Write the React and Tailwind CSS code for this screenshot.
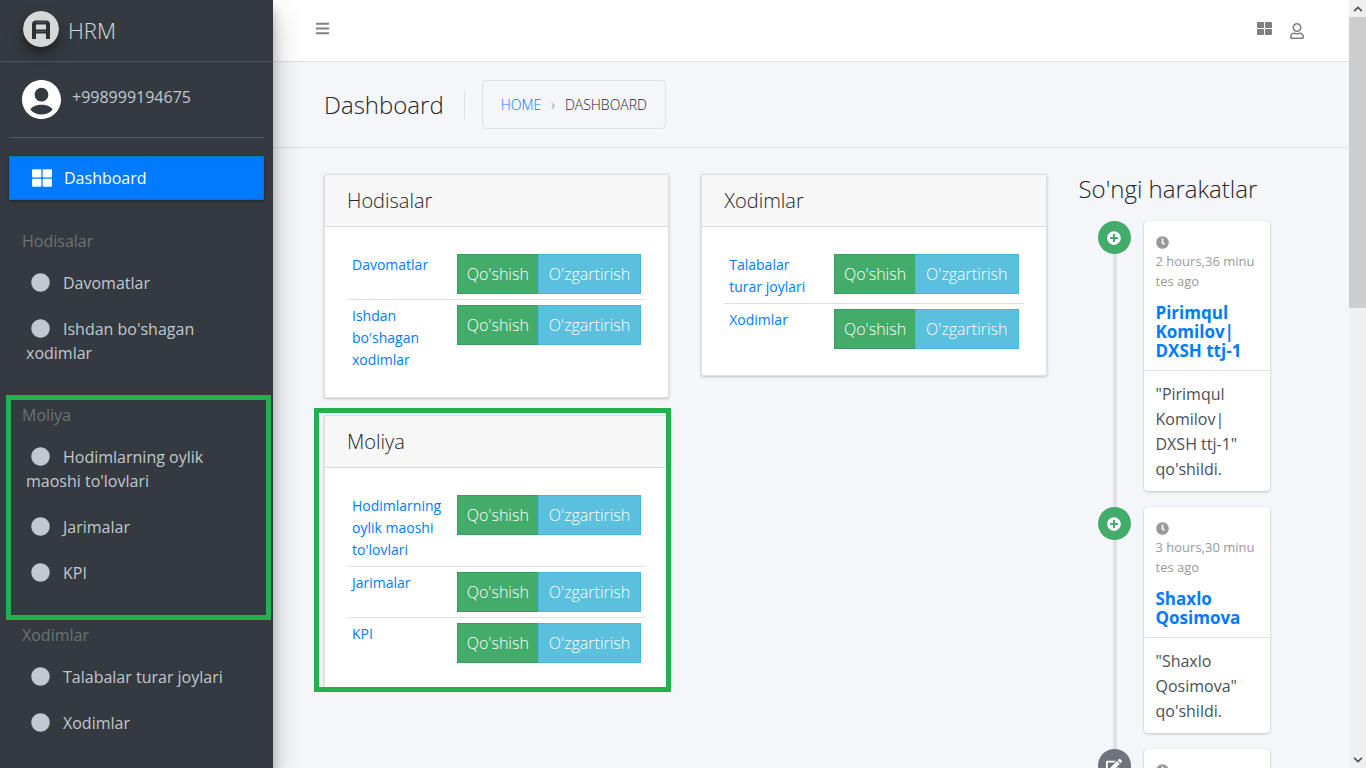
import React from "react";
import {
  FaThLarge,
  FaBars,
  FaRegUser,
  FaCircle,
  FaClock,
  FaPlusCircle,
  FaEdit,
  FaChevronUp,
  FaChevronDown,
} from "react-icons/fa";

const menu = [
  { title: "Hodisalar", items: ["Davomatlar", "Ishdan bo'shagan xodimlar"] },
  {
    title: "Moliya",
    marked: true,
    items: ["Hodimlarning oylik maoshi to'lovlari", "Jarimalar", "KPI"],
  },
  { title: "Xodimlar", items: ["Talabalar turar joylari", "Xodimlar"] },
];

const actions = [
  {
    kind: "add",
    time: "2\u00a0hours,36\u00a0minutes\u00a0ago",
    title: "Pirimqul Komilov| DXSH ttj-1",
    text: "\"Pirimqul Komilov| DXSH ttj-1\" qo'shildi.",
  },
  {
    kind: "add",
    time: "3\u00a0hours,30\u00a0minutes\u00a0ago",
    title: "Shaxlo Qosimova",
    text: "\"Shaxlo Qosimova\" qo'shildi.",
  },
  { kind: "edit" },
];

function Logo() {
  return (
    <svg
      viewBox="0 0 36 36"
      className="h-9 w-9 rounded-full shadow-[0_10px_20px_rgba(0,0,0,0.19),0_6px_6px_rgba(0,0,0,0.23)]"
      aria-hidden="true"
    >
      <circle cx="18" cy="18" r="18" fill="#d6d7d8" />
      <path
        d="M11 28V13.5Q11 11.500 13 11.500H23Q25 11.500 25 13.500V28M11 20.500H25"
        fill="none"
        stroke="#2d3034"
        strokeWidth="4"
      />
      <path d="M13 11.200H23M13 20.500H23" stroke="#5c5f62" strokeWidth="0.800" />
    </svg>
  );
}

function Avatar() {
  return (
    <svg viewBox="2 2 20 20" className="h-[39px] w-[39px]" fill="#fff" aria-hidden="true">
      <path d="M12 2C6.48 2 2 6.48 2 12s4.480 10 10 10 10-4.480 10-10S17.520 2 12 2zm0 4c1.930 0 3.500 1.570 3.500 3.500S13.930 13 12 13s-3.500-1.570-3.500-3.500S10.070 6 12 6zm0 13.700c-2.290 0-4.400-.9-5.700-2.600.6-1.500 3.300-2.400 5.700-2.400s5.100.9 5.700 2.400c-1.300 1.700-3.410 2.600-5.700 2.600z" />
    </svg>
  );
}

function Sidebar() {
  return (
    <aside className="relative z-10 w-[273px] shrink-0 bg-[#343a40] text-[#c2c7d0] shadow-[0_14px_28px_rgba(0,0,0,0.25),0_10px_10px_rgba(0,0,0,0.22)]">
      <a
        href="#home"
        className="flex h-[62px] items-center gap-[9px] border-b border-[#4b545c] pb-1 pl-[23px] text-[22px] font-light text-white/80"
      >
        <Logo />
        <span className="pt-1">HRM</span>
      </a>
      <div className="px-[9px]">
        <div className="flex h-[76px] items-center gap-[11px] border-b border-[#4f5962] pl-[13px]">
          <Avatar />
          <a href="#profile" className="pb-1.5">
            +998999194675
          </a>
        </div>
        <nav className="mt-[18px]">
          <a
            href="#dashboard"
            className="flex h-11 items-center gap-2 border border-[#0c74bd] bg-[#007bff] pl-[18px] text-white shadow-[0_1px_3px_rgba(0,0,0,0.12),0_1px_2px_rgba(0,0,0,0.24)]"
          >
            <span className="flex w-7 justify-center">
              <FaThLarge size={20} />
            </span>
            Dashboard
          </a>
          {menu.map((group) => (
            <section key={group.title} className="relative mt-[29px]">
              <h2 className="pl-[13px] leading-6 text-[#6d7276]">{group.title}</h2>
              <ul className="mt-[9px] flex flex-col gap-1">
                {group.items.map((item) => (
                  <li key={item}>
                    <a href="#item" className="block py-[9px] pr-4 pl-[17px] leading-6">
                      <span className="mr-2 inline-flex h-5 w-[29px] items-center justify-center pb-1 align-middle">
                        <FaCircle size={19} className="shrink-0" />
                      </span>
                      {item}
                    </a>
                  </li>
                ))}
              </ul>
              {group.marked && (
                <div className="pointer-events-none absolute -top-2 -right-[7px] -bottom-[26px] -left-[3px] border-5 border-[#22b14c]" />
              )}
            </section>
          ))}
        </nav>
      </div>
    </aside>
  );
}

function Card({ title, items, marked }) {
  return (
    <section className="relative rounded-xs border border-black/12 bg-white shadow-[0_0_1px_rgba(0,0,0,0.125),0_1px_3px_rgba(0,0,0,0.2)]">
      <h3 className="flex h-[52px] items-center border-b border-black/12 bg-[#f7f7f7] px-[22px] text-xl font-light">
        {title}
      </h3>
      <div className="px-[22px] pt-[22px] pb-[21px]">
        <table className="w-full">
          <tbody>
            {items.map((item) => (
              <tr key={item} className="border-t border-[#dee2e6] align-top first:border-t-0">
                <th scope="row" className="p-[5px] text-left text-sm leading-[22px] font-normal">
                  <a href="#model" className="text-[#007bff]">
                    {item}
                  </a>
                </th>
                <td className="w-px p-[5px]">
                  <div className="flex whitespace-nowrap font-light text-white">
                    <a
                      href="#add"
                      className="flex h-10 items-center border border-r-0 border-[#3c9a5f] bg-[#43ac6a] px-[9px]"
                    >
                      Qo'shish
                    </a>
                    <a
                      href="#change"
                      className="flex h-10 items-center border border-[#46b8da] bg-[#5bc0de] px-[10px]"
                    >
                      O'zgartirish
                    </a>
                  </div>
                </td>
              </tr>
            ))}
          </tbody>
        </table>
      </div>
      {marked && (
        <div className="pointer-events-none absolute -top-2 -right-[3px] -bottom-[3px] -left-[11px] border-5 border-[#22b14c]" />
      )}
    </section>
  );
}

function Timeline() {
  return (
    <ul className="relative mt-[17px] flex flex-col gap-4 pr-7 pl-[19px]">
      <li aria-hidden="true" className="absolute top-0 bottom-0 left-[34px] w-1 bg-[#dee2e6]" />
      {actions.map((a, i) => (
        <li key={i} className="relative flex items-start gap-[13px]">
          {a.kind === "add" ? (
            <span className="flex h-[33px] w-[33px] shrink-0 items-center justify-center rounded-full bg-[#43ac6a] text-white">
              <FaPlusCircle size={14} />
            </span>
          ) : (
            <span className="flex h-[33px] w-[33px] shrink-0 items-center justify-center rounded-full bg-[#6c757d] text-white">
              <FaEdit size={16} />
            </span>
          )}
          <article className="min-w-0 flex-1 rounded bg-white text-[#495057] shadow-[0_0_1px_rgba(0,0,0,0.125),0_1px_3px_rgba(0,0,0,0.2)]">
            <header className="border-b border-black/12 px-3 pt-[11px] pb-[10px]">
              <p className="text-[13px] leading-5 text-[#999]">
                <FaClock size={13} className="mt-1 mb-[2px] block" />
                {a.time && <span className="block wrap-anywhere">{a.time}</span>}
              </p>
              {a.title && (
                <h3 className="mt-3 text-[17px] leading-[19px] font-bold text-[#007bff]">
                  <a href="#entry">{a.title}</a>
                </h3>
              )}
            </header>
            {a.text && <p className="px-3 pt-[11px] pb-[9px] leading-[25px]">{a.text}</p>}
          </article>
        </li>
      ))}
    </ul>
  );
}

function Scrollbar() {
  return (
    <div
      aria-hidden="true"
      className="flex w-[17px] shrink-0 flex-col items-center bg-[#f0f0f0] text-[#505050]"
    >
      <span className="flex h-[17px] items-center">
        <FaChevronUp size={10} />
      </span>
      <span className="h-[291px] w-full bg-[#cdcdcd]" />
      <span className="mt-auto flex h-[17px] items-center">
        <FaChevronDown size={10} />
      </span>
    </div>
  );
}

export default function App() {
  return (
    <div className="flex h-screen overflow-hidden bg-[#f4f6f9] font-['Open_Sans',sans-serif] text-base text-[#212529]">
      <Sidebar />
      <div className="min-w-0 flex-1">
        <header className="flex h-[62px] items-center justify-between border-b border-[#dee2e6] bg-white pr-11 pl-[42px] text-black/50">
          <button type="button" aria-label="Menu" className="pb-1">
            <FaBars size={15} />
          </button>
          <div className="flex items-center gap-[17px]">
            <a href="#apps" aria-label="Apps" className="pb-1">
              <FaThLarge size={15} />
            </a>
            <a href="#account" aria-label="Account">
              <FaRegUser size={16} />
            </a>
          </div>
        </header>
        <div className="flex h-[86px] items-center border-b border-[#dee2e6] pl-[51px] font-light">
          <h1 className="text-2xl">Dashboard</h1>
          <div className="ml-5 h-[29px] w-px bg-[#dee2e6]" />
          <nav
            aria-label="Breadcrumb"
            className="ml-[17px] flex h-[49px] items-center gap-[10px] rounded border border-[#dee2e6] px-[18px] text-sm"
          >
            <a href="#home" className="text-[#007bff]">
              HOME
            </a>
            <span className="text-[#6c757d]">›</span>
            <span>DASHBOARD</span>
          </nav>
        </div>
        <main className="grid grid-cols-4 px-[35px] pt-[26px]">
          <div className="col-span-3 grid grid-cols-2 items-start gap-8 px-4">
            <div className="flex flex-col gap-[17px]">
              <Card title="Hodisalar" items={["Davomatlar", "Ishdan bo'shagan xodimlar"]} />
              <Card
                title="Moliya"
                marked
                items={["Hodimlarning oylik maoshi to'lovlari", "Jarimalar", "KPI"]}
              />
            </div>
            <Card title="Xodimlar" items={["Talabalar turar joylari", "Xodimlar"]} />
          </div>
          <aside className="px-4">
            <h2 className="text-2xl leading-[30px] font-light">So'ngi harakatlar</h2>
            <Timeline />
          </aside>
        </main>
      </div>
      <Scrollbar />
    </div>
  );
}
